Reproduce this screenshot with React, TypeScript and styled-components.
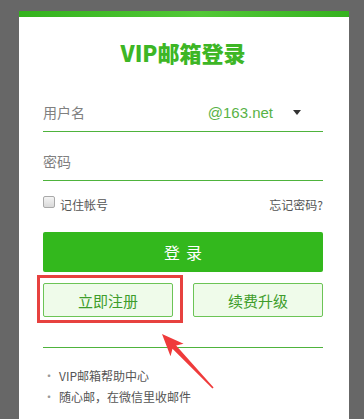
import styled, { createGlobalStyle } from "styled-components"

const GlobalStyle = createGlobalStyle`
    html, body {
        margin: 0;
        padding: 0;
        background: #676767;
        font-family: "Noto Sans CJK SC", "Liberation Sans", sans-serif;
    }
`

const Page = styled.div`
    position: relative;
    width: 364px;
    height: 419px;
    overflow: hidden;
    padding-top: 11px;
    box-sizing: border-box;
`

const Card = styled.div`
    margin-left: 19px;
    width: 330px;
    height: 420px;
    box-sizing: border-box;
    background: #fff;
    border-top: 6px solid #3cb523;
    border-image: linear-gradient(90deg, #33b21d, #52c836 55%, #34b11e) 1;
    border-left: 0;
    border-right: 0;
    border-bottom: 0;
    padding: 0 26px 0 24px;
    display: flex;
    flex-direction: column;
`

const Title = styled.h1`
    margin: 24px 0 0;
    font-size: 22px;
    line-height: 23px;
    font-weight: 900;
    text-align: center;
    color: #3db625;
`

interface FieldProps {
    gap?: number
}

const Field = styled.div<FieldProps>`
    margin-top: ${props => props.gap ?? 10}px;
    height: 38px;
    display: flex;
    align-items: center;
    border-bottom: 1px solid #4eb33c;
    font-size: 14px;
    color: #808080;
`

const Label = styled.span`
    flex: 1;
`

const Domain = styled.span`
    font-family: "Liberation Sans", sans-serif;
    font-size: 15px;
    color: #58b246;
    margin-right: 20px;
`

const Caret = styled.span`
    width: 0;
    height: 0;
    border-left: 4px solid transparent;
    border-right: 4px solid transparent;
    border-top: 5px solid #333;
    margin-right: 22px;
`

const Options = styled.div`
    margin-top: 13px;
    height: 20px;
    display: flex;
    align-items: center;
    justify-content: space-between;
    font-size: 12px;
    color: #555;
`

const Remember = styled.label`
    display: flex;
    align-items: center;
    gap: 5px;
`

const Check = styled.input`
    appearance: none;
    margin: 0;
    width: 12px;
    height: 12px;
    border: 1px solid #a9a9a9;
    border-radius: 2px;
    background: linear-gradient(#f4f4f4, #d9d9d9);
    box-sizing: border-box;
    position: relative;
    top: -2px;
`

const LoginButton = styled.button`
    margin-top: 18px;
    height: 40px;
    border: 0;
    border-radius: 2px;
    background: #33b81d;
    color: #fff;
    font-family: inherit;
    font-size: 16px;
    letter-spacing: 6px;
    text-indent: 6px;
`

const ButtonRow = styled.div`
    margin-top: 11px;
    display: flex;
    gap: 20px;
`

const GhostButton = styled.button`
    flex: 1;
    height: 34px;
    border: 1px solid #6cc456;
    border-radius: 2px;
    background: #effbea;
    color: #3e9d2b;
    font-family: inherit;
    font-size: 15px;
`

const Divider = styled.div`
    margin-top: 30px;
    height: 1px;
    background: #4eb33c;
`

const Links = styled.ul`
    margin: 17px 0 0;
    padding: 0;
    list-style: none;
    font-size: 12px;
    line-height: 21px;
    color: #555;
`

const Link = styled.li`
    &::before {
        content: "·";
        margin-right: 4px;
        color: #999;
    }
`

const Highlight = styled.div`
    position: absolute;
    left: 37px;
    top: 275px;
    width: 146px;
    height: 48px;
    box-sizing: border-box;
    border: 3px solid #e7413f;
    pointer-events: none;
`

const Arrow = styled.svg`
    position: absolute;
    left: 150px;
    top: 325px;
    pointer-events: none;
`

export default function App(): JSX.Element {
    return (
        <Page>
            <GlobalStyle />
            <Card>
                <Title>VIP邮箱登录</Title>
                <Field gap={29}>
                    <Label>用户名</Label>
                    <Domain>@163.net</Domain>
                    <Caret />
                </Field>
                <Field>
                    <Label>密码</Label>
                </Field>
                <Options>
                    <Remember>
                        <Check type="checkbox" />
                        记住帐号
                    </Remember>
                    <span>忘记密码?</span>
                </Options>
                <LoginButton>登录</LoginButton>
                <ButtonRow>
                    <GhostButton>立即注册</GhostButton>
                    <GhostButton>续费升级</GhostButton>
                </ButtonRow>
                <Divider />
                <Links>
                    <Link>VIP邮箱帮助中心</Link>
                    <Link>随心邮，在微信里收邮件</Link>
                </Links>
            </Card>
            <Highlight />
            <Arrow width="70" height="70" viewBox="150 325 70 70">
                <polygon
                    points="162,334 183.6,343.8 176.1,345.4 213.6,387.5 212.4,388.5 172.5,348.8 170.5,356.2"
                    fill="#ef3b3b"
                />
            </Arrow>
        </Page>
    )
}
